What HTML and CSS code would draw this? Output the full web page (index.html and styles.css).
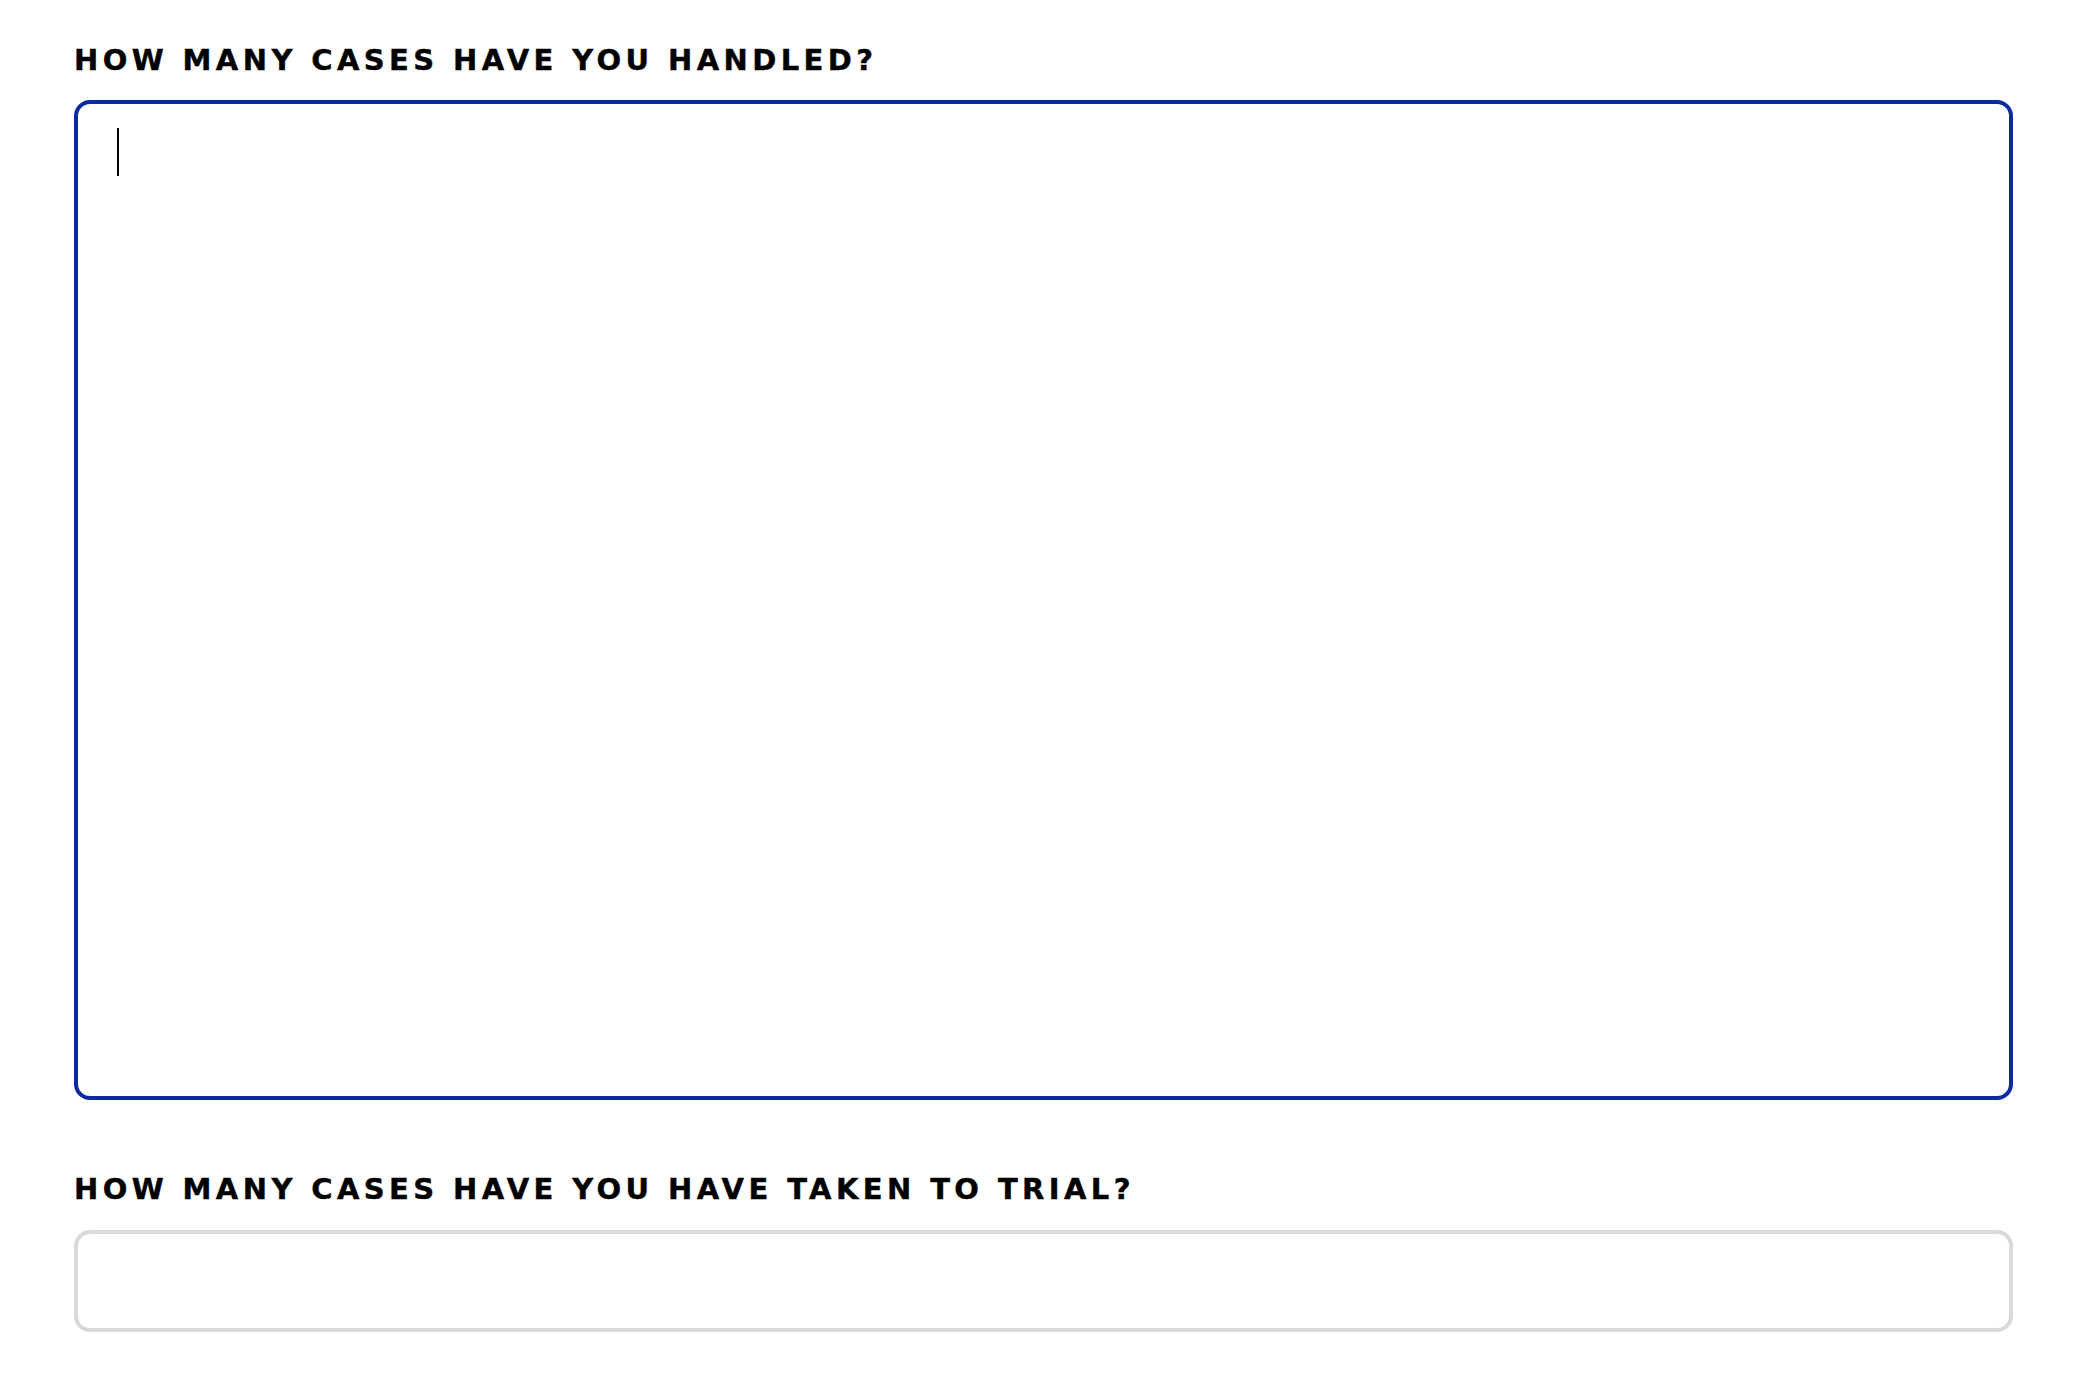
FILE: index.html
```html
<!DOCTYPE html>
<html lang="en">
<head>
<meta charset="utf-8">
<title>Cases form</title>
<link rel="stylesheet" href="styles.css">
</head>
<body>
<form class="form">
  <div class="field">
    <label class="field-label" for="handled">HOW MANY CASES HAVE YOU HANDLED?</label>
    <div class="textarea-wrap">
      <textarea id="handled" class="textarea is-focused"></textarea>
      <span class="caret"></span>
    </div>
  </div>
  <div class="field field-second">
    <label class="field-label" for="trial">HOW MANY CASES HAVE YOU HAVE TAKEN TO TRIAL?</label>
    <input id="trial" class="input" type="text">
  </div>
</form>
</body>
</html>
```

FILE: styles.css
```css
html, body {
  margin: 0;
  padding: 0;
  background: #ffffff;
}

.form {
  padding: 43px 81px 0 74px;
  font-family: "DejaVu Sans", "Liberation Sans", sans-serif;
}

.field {
  display: flex;
  flex-direction: column;
}

.field-second {
  margin-top: 72px;
}

.field-label {
  display: block;
  font-size: 29px;
  line-height: 34px;
  font-weight: 700;
  letter-spacing: 4.4px;
  color: #000000;
  margin-bottom: 23px;
  -webkit-text-stroke: 0.4px #000000;
}

.field-second .field-label {
  margin-bottom: 24px;
}

.textarea-wrap {
  position: relative;
}

.textarea {
  display: block;
  box-sizing: border-box;
  width: 100%;
  height: 1000px;
  margin: 0;
  padding: 24px 40px;
  border: 4px solid #0a2aa2;
  border-radius: 16px;
  background: #ffffff;
  resize: none;
  outline: none;
  font-family: "DejaVu Sans", sans-serif;
  font-size: 36px;
}

.caret {
  position: absolute;
  left: 43px;
  top: 28px;
  width: 2px;
  height: 48px;
  background: #000000;
}

.input {
  display: block;
  box-sizing: border-box;
  width: 100%;
  height: 102px;
  margin: 0;
  padding: 0 40px;
  border: 4px solid #d9d9d9;
  border-radius: 16px;
  background: #ffffff;
  outline: none;
  font-family: "DejaVu Sans", sans-serif;
  font-size: 30px;
}
```
